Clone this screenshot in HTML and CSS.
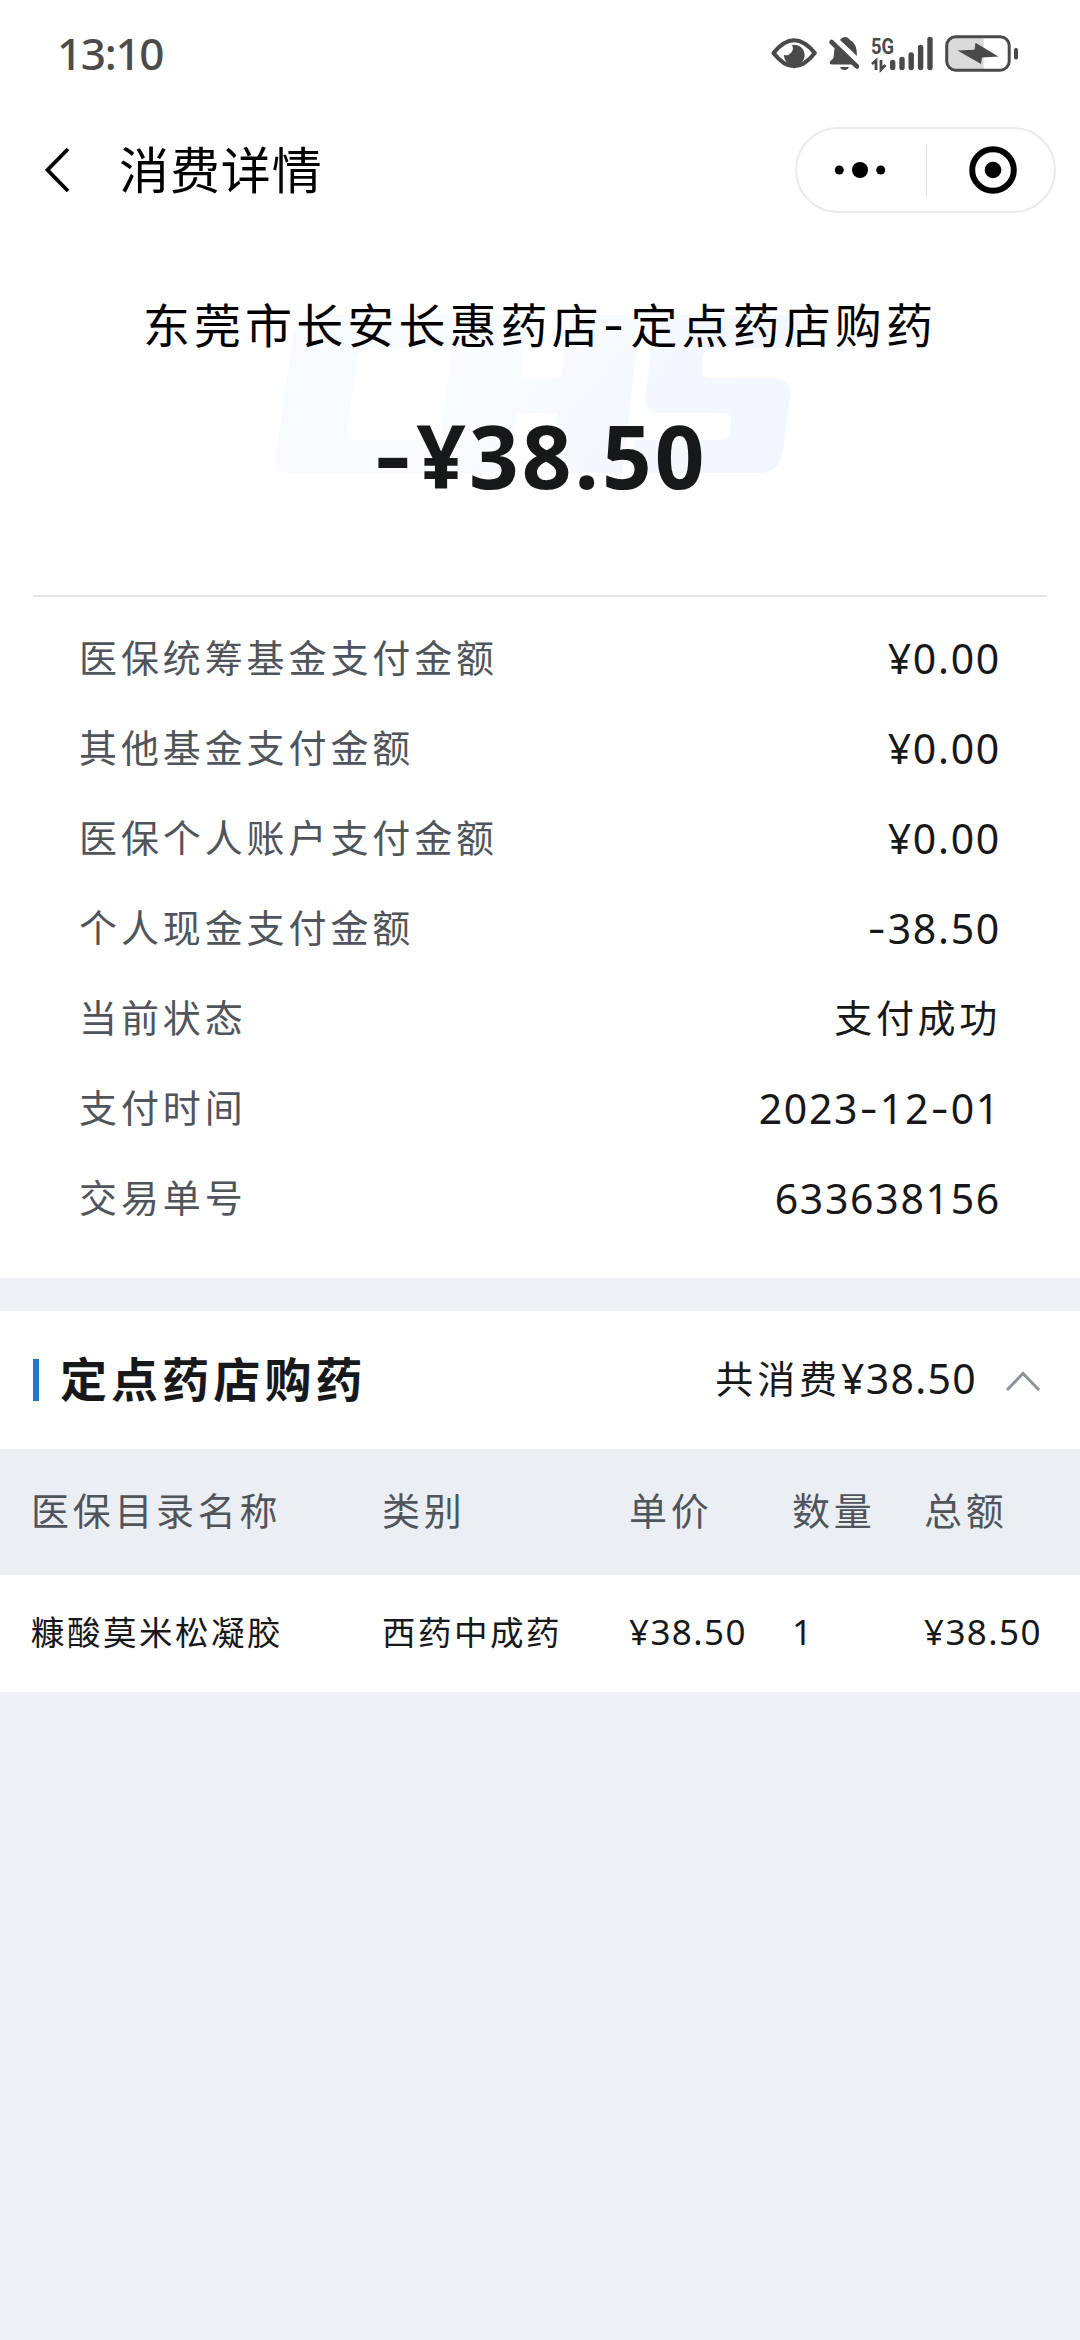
FILE: index.html
```html
<!DOCTYPE html>
<html lang="zh-CN">
<head>
<meta charset="utf-8">
<title>消费详情</title>
<link rel="stylesheet" href="styles.css">
</head>
<body>
<header class="status-bar">
  <span class="clock">13:10</span>
  <svg class="status-icons" viewBox="770 30 250 46" width="250" height="46">
    <path d="M773.500 53Q794 27.500 814.800 53Q794 79.500 773.500 53Z" fill="none" stroke="#4a4a4a" stroke-width="4.200" stroke-linejoin="round"/>
    <path d="M792 45A10.3 10.3 0 1 1 784 55A7 7 0 0 0 792 45Z" fill="#4a4a4a"/>
    <path d="M840 40Q842 37 845.500 37Q848 37 850 40Q857 43 857 56ZM834.500 48L853 64.500H832Q829 64.500 830 61.500L833.500 58ZM840 67H849Q848 70 844.500 70Q841 70 840 67Z" fill="#4a4a4a"/>
    <path d="M831.500 42L857 66.500" stroke="#4a4a4a" stroke-width="4.600" stroke-linecap="round"/>
    <text class="net" x="871" y="53.500" textLength="23" lengthAdjust="spacingAndGlyphs">5G</text>
    <path d="M872 64L876 60.500V70M881 60V69.500L885.500 65" fill="none" stroke="#4a4a4a" stroke-width="2.800"/>
    <path d="M892.700 62.500V67.500M902 59.500V67.500M911.200 55V67.500M920.600 47.500V67.500M930 39.500V67.500" stroke="#4a4a4a" stroke-width="5.400" stroke-linecap="round"/>
    <path d="M956 37H983.700V70H956Q947 70 947 61V46Q947 37 956 37Z" fill="#dadada"/>
    <rect x="946.700" y="36.700" width="62.500" height="33.500" rx="9" fill="none" stroke="#4a4a4a" stroke-width="3"/>
    <path d="M957.500 50.500L974.500 49.700L975.500 42.800L998.500 56.500L982 57.500L981 64Z" fill="#4a4a4a"/>
    <rect x="1014" y="48" width="4" height="11.500" rx="1.800" fill="#4a4a4a"/>
  </svg>
</header>

<nav class="nav">
  <svg class="back" viewBox="0 0 28 48" width="28" height="48"><path d="M24 3L3.500 24L24 45" fill="none" stroke="#000" stroke-width="3.800"/></svg>
  <h1 class="nav-title">消费详情</h1>
  <div class="capsule">
    <svg class="more" viewBox="0 0 52 20" width="52" height="20"><circle cx="5.300" cy="10" r="4.500"/><circle cx="26" cy="10" r="8"/><circle cx="46.700" cy="10" r="4.500"/></svg>
    <span class="capsule-line"></span>
    <svg class="close" viewBox="0 0 50 50" width="50" height="50"><circle cx="25" cy="25" r="20.800" fill="none" stroke="#000" stroke-width="6"/><circle cx="25" cy="25" r="8.300"/></svg>
  </div>
</nav>

<section class="summary">
  <svg class="emblem" viewBox="270 310 530 168" width="530" height="168" aria-hidden="true">
    <defs>
      <linearGradient id="tint" x1="0" y1="0" x2="1" y2="0.25">
        <stop offset="0" stop-color="#f7fbff"/>
        <stop offset="0.5" stop-color="#f8fbff"/>
        <stop offset="1" stop-color="#f2f7fe"/>
      </linearGradient>
    </defs>
    <path fill="url(#tint)" d="M318 315H529L520 378H561L570 315H641L622 473H551L558 413H516L508 473H287Q274 473 275 460L293 337Q297 315 318 315ZM370 348Q359 348 357 358L347 430Q346 440 357 440H440L452 348ZM677 315H802L797 348H713Q705 348 703 357L702 369Q701 378 710 378H772Q792 378 790 396L783 451Q779 473 760 473H630L635 440H719Q728 440 730 432L731 422Q732 413 723 413H662Q643 413 645 396L653 338Q657 315 677 315Z"/>
  </svg>
  <p class="merchant">东莞市长安长惠药店<span class="dash">-</span>定点药店购药</p>
  <p class="amount"><span class="dash">-</span>¥38.50</p>
</section>

<dl class="details">
  <div class="row"><dt>医保统筹基金支付金额</dt><dd>¥0.00</dd></div>
  <div class="row"><dt>其他基金支付金额</dt><dd>¥0.00</dd></div>
  <div class="row"><dt>医保个人账户支付金额</dt><dd>¥0.00</dd></div>
  <div class="row"><dt>个人现金支付金额</dt><dd><span class="dash">-</span>38.50</dd></div>
  <div class="row"><dt>当前状态</dt><dd class="cjk">支付成功</dd></div>
  <div class="row"><dt>支付时间</dt><dd>2023<span class="dash">-</span>12<span class="dash">-</span>01</dd></div>
  <div class="row"><dt>交易单号</dt><dd>633638156</dd></div>
</dl>

<section class="items">
  <div class="items-head">
    <h2 class="items-title">定点药店购药</h2>
    <div class="items-total"><span class="total-label">共消费</span><span class="total-value">¥38.50</span></div>
    <svg class="fold" viewBox="0 0 36 22" width="36" height="22"><path d="M2 20L18 3.500L34 20" fill="none" stroke="#8d9399" stroke-width="3"/></svg>
  </div>
  <div class="grid grid-head"><span>医保目录名称</span><span>类别</span><span>单价</span><span>数量</span><span>总额</span></div>
  <div class="grid grid-row"><span>糠酸莫米松凝胶</span><span>西药中成药</span><span class="num">¥38.50</span><span class="num">1</span><span class="num">¥38.50</span></div>
</section>
</body>
</html>
```
FILE: styles.css
```css
* { box-sizing: border-box; margin: 0; padding: 0; }

body {
  width: 1080px;
  min-height: 2340px;
  background: #eff1f5;
  color: #17181a;
  font-family: "Noto Sans", "Noto Sans CJK SC", sans-serif;
  font-weight: 400;
}

svg { display: block; flex: none; }

.status-bar {
  height: 108px;
  padding: 0 60px 2px 57px;
  display: flex;
  align-items: center;
  justify-content: space-between;
  background: #fff;
}
.clock { font-size: 44px; line-height: 60px; font-weight: 500; letter-spacing: -1.3px; color: #4c4c4c; }
.net { font: 700 22px Roboto, sans-serif; fill: #4a4a4a; }

.nav {
  height: 124px;
  padding: 0 24px 0 44px;
  display: flex;
  align-items: center;
  background: #fff;
}
.nav-title {
  margin-left: 47px;
  padding-bottom: 6px;
  font: 400 50px/70px "Noto Sans CJK SC", sans-serif;
  letter-spacing: 0.9px;
  color: #000;
}
.capsule {
  width: 261px;
  height: 86px;
  margin-left: auto;
  padding: 0 36px 0 37px;
  display: flex;
  align-items: center;
  justify-content: space-between;
  border: 2px solid #ebebeb;
  border-radius: 43px;
}
.capsule-line { width: 1px; height: 51px; margin-right: 2px; background: #ddd; }

.summary {
  position: relative;
  height: 363px;
  padding-top: 56px;
  background: #fff;
  text-align: center;
}
.emblem { position: absolute; left: 270px; top: 78px; }
.merchant {
  position: relative;
  font: 400 47px/70px "Noto Sans CJK SC", sans-serif;
  letter-spacing: 4.1px;
  color: #000;
}
.merchant .dash { letter-spacing: 6px; }
.amount {
  position: relative;
  margin-top: 39px;
  font-size: 87px;
  line-height: 110px;
  font-weight: 700;
  letter-spacing: 3px;
}
.dash { font-family: Inter, sans-serif; }

.details {
  height: 683px;
  padding: 18px 79px 0 79px;
  background: linear-gradient(#e4e5e8, #e4e5e8) 33px 0 / 1014px 2px no-repeat #fff;
}
.row { height: 90px; display: flex; align-items: center; justify-content: space-between; }
.row dt {
  padding-bottom: 4px;
  font: 400 38px/60px "Noto Sans CJK SC", sans-serif;
  letter-spacing: 3.9px;
  color: #50555c;
}
.row dd { font-size: 41px; line-height: 60px; letter-spacing: 1.7px; }
.row .cjk { padding-bottom: 4px; font: 400 38px/60px "Noto Sans CJK SC", sans-serif; letter-spacing: 3.7px; }

.items { margin-top: 33px; background: #fff; }
.items-head { height: 138px; padding: 0 39px 0 33px; display: flex; align-items: center; }
.items-title {
  display: flex;
  align-items: center;
  gap: 21px;
  margin-top: -7px;
  font: 700 47px/70px "Noto Sans CJK SC", sans-serif;
  letter-spacing: 4.1px;
}
.items-title::before { content: ""; width: 6px; height: 42px; margin-top: 7px; background: #2377cc; }
.items-total { margin: -5px 28px 0 auto; display: flex; align-items: center; }
.total-label { padding-bottom: 2px; font: 400 38px/60px "Noto Sans CJK SC", sans-serif; letter-spacing: 3.900px; }
.total-value { font-size: 41px; line-height: 60px; letter-spacing: 1.3px; }
.fold { margin-top: 2px; }

.grid {
  display: grid;
  grid-template-columns: 351px 247px 163px 132px 1fr;
  align-items: center;
  padding: 0 0 5px 31px;
  white-space: nowrap;
}
.grid-head {
  height: 126px;
  padding-bottom: 7px;
  background: #ebeff3;
  color: #50555c;
  font: 400 38px/60px "Noto Sans CJK SC", sans-serif;
  letter-spacing: 3.7px;
}
.grid-row { height: 117px; font: 400 33.500px/60px "Noto Sans CJK SC", sans-serif; letter-spacing: 2.5px; }
.num { padding-top: 1px; font: 400 35px/60px "Noto Sans", sans-serif; letter-spacing: 1.4px; }
```
